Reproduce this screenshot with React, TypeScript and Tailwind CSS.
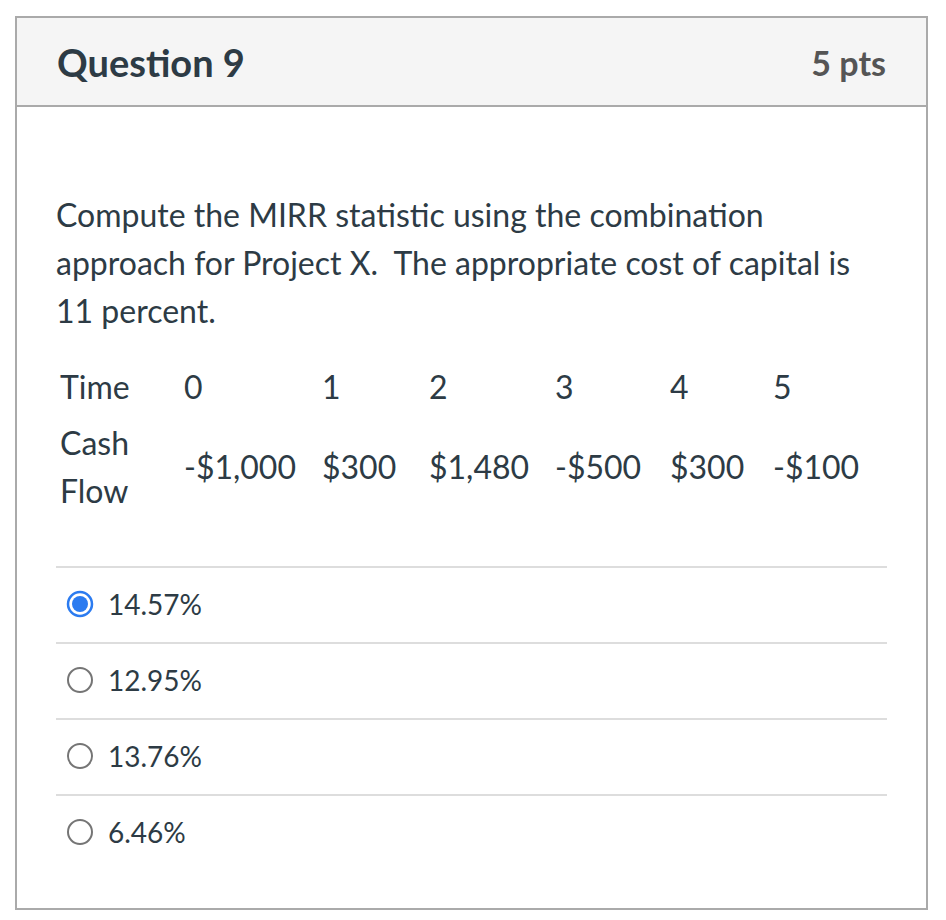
import React from "react";

const answers = [
  { label: "14.57%", selected: true },
  { label: "12.95%", selected: false },
  { label: "13.76%", selected: false },
  { label: "6.46%", selected: false },
];

const times = ["0", "1", "2", "3", "4", "5"];
const flows = ["-$1,000", "$300", "$1,480", "-$500", "$300", "-$100"];
const colWidths = ["w-[138px]", "w-[107px]", "w-[126px]", "w-[115px]", "w-[103px]", "w-[90px]"];

const Radio = ({ checked }: { checked: boolean }) => (
  <svg width="28" height="28" viewBox="0 0 28 28" className="shrink-0">
    {checked ? (
      <>
        <circle cx="14" cy="14" r="12" fill="white" stroke="#2b7bf0" strokeWidth="2.5" />
        <circle cx="14" cy="14" r="8" fill="#2b7bf0" />
      </>
    ) : (
      <circle cx="14" cy="14" r="12" fill="white" stroke="#757575" strokeWidth="2" />
    )}
  </svg>
);

export default function App() {
  return (
    <div className="min-h-screen bg-white pt-[16px] pl-[15px] font-['Lato','Noto_Sans',sans-serif] text-[#2d3b45]">
      <div className="w-[913px] h-[894px] border-2 border-[#aaaaaa]">
        {/* header */}
        <div className="h-[89px] bg-[#f5f5f5] border-b-2 border-[#aaaaaa] flex items-center justify-between px-[40px] pt-[2px]">
          <h2 className="text-[38px] font-bold">Question 9</h2>
          <span className="text-[34px] font-bold text-[#555555]">5 pts</span>
        </div>

        {/* body */}
        <div className="px-[39px] pt-[84px]">
          <p className="text-[32px] leading-[48px] pr-[30px]">
            Compute the MIRR statistic using the combination approach for Project X.&nbsp; The appropriate cost of capital is 11 percent.
          </p>

          <table className="mt-[24px] text-[32px] leading-[48px] border-collapse">
            <tbody>
              <tr>
                <td className="w-[124px] px-[4px] py-[4px]">Time</td>
                {times.map((t, i) => (
                  <td key={i} className={`${colWidths[i]} px-[4px] py-[4px]`}>{t}</td>
                ))}
              </tr>
              <tr>
                <td className="px-[4px] py-[4px]">
                  Cash
                  <br />
                  Flow
                </td>
                {flows.map((f, i) => (
                  <td key={i} className="px-[4px] py-[4px] whitespace-nowrap">{f}</td>
                ))}
              </tr>
            </tbody>
          </table>

          <div className="mt-[47px]">
            {answers.map((a, i) => (
              <div key={i} className="h-[76px] border-t-2 border-[#dddddd] flex items-center gap-[14px] pl-[10px] pb-[3px] text-[28px]">
                <Radio checked={a.selected} />
                <span>{a.label}</span>
              </div>
            ))}
          </div>
        </div>
      </div>
    </div>
  );
}
